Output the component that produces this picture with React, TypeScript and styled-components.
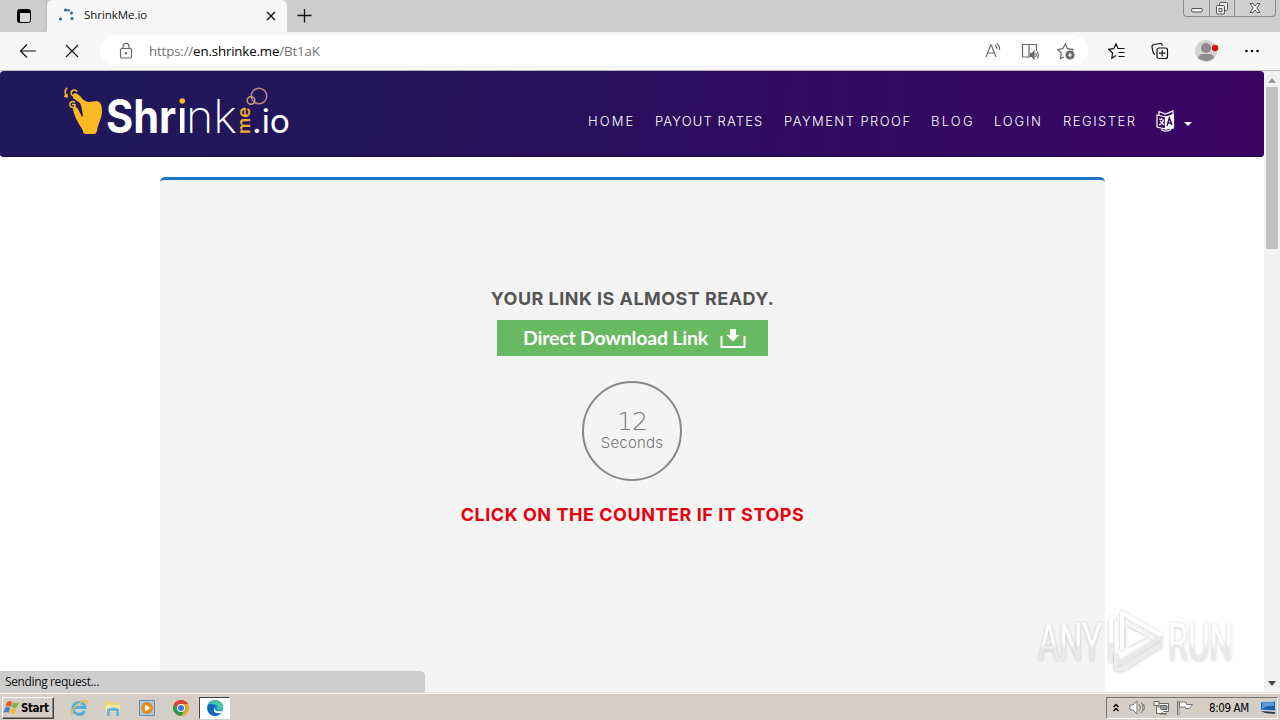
import React from "react";
import styled, { createGlobalStyle } from "styled-components";

const GlobalStyle = createGlobalStyle`
  * {
    box-sizing: border-box;
  }
  body {
    margin: 0;
    overflow: hidden;
    font-family: "Open Sans", "Noto Sans", sans-serif;
  }
  svg {
    display: block;
    flex: none;
  }
`;

const Screen = styled.div`
  position: relative;
  width: 1280px;
  height: 720px;
  display: flex;
  flex-direction: column;
  overflow: hidden;
  background: #fff;
`;

const TabStrip = styled.header`
  height: 32px;
  display: flex;
  background: #cdcdcd;
`;

const TabActions = styled.div`
  width: 47px;
  padding: 9px 0 0 17px;
  border-radius: 0 0 5px 0;
  box-shadow: inset -2px 0 2px -1px #b8b8b8;
`;

const Tab = styled.div`
  width: 240px;
  height: 32px;
  padding: 0 11px 0 10px;
  display: flex;
  align-items: center;
  background: #f7f7f7;
  border-radius: 6px 6px 0 0;
`;

const TabTitle = styled.span`
  flex: 1;
  margin-left: 9px;
  font-size: 11.5px;
  letter-spacing: -0.05px;
  line-height: 14px;
  margin-top: -2px;
  color: #111;
`;

const NewTab = styled.div`
  padding: 9px 0 0 10px;
`;

const WindowButtons = styled.div`
  height: 17px;
  margin: 0 4px 0 auto;
  display: flex;
  border: 1px solid #8a8a8a;
  border-top: 0;
  border-radius: 0 0 4px 4px;
  background: #cfcfcf;
`;

const WindowButton = styled.div<{ $width: number }>`
  width: ${({ $width }) => $width}px;
  display: flex;
  justify-content: center;
  & + & {
    border-left: 1px solid #8a8a8a;
  }
`;

const Toolbar = styled.div`
  height: 39px;
  display: flex;
  align-items: center;
  padding: 0 19px 1px 19px;
  background: #f7f7f7;
  border-bottom: 1px solid #b9b9c4;
`;

const NavButtons = styled.div`
  width: 81px;
  display: flex;
  gap: 27px;
`;

const AddressBar = styled.div`
  width: 988px;
  height: 31px;
  display: flex;
  align-items: center;
  padding: 0 13px 0 18px;
  background: #fff;
  border-radius: 16px;
`;

const Url = styled.span`
  flex: 1;
  margin-left: 15px;
  font-size: 13.3px;
  letter-spacing: -0.16px;
  color: #707070;
  b {
    font-weight: 400;
    color: #000;
  }
`;

const AddressIcons = styled.div`
  display: flex;
  gap: 18px;
`;

const BrowserIcons = styled.div`
  display: flex;
  align-items: center;
  margin-left: 20px;
`;

const Viewport = styled.div`
  height: 621px;
  display: flex;
`;

const Page = styled.main`
  width: 1264px;
  height: 621px;
  overflow: hidden;
`;

const SiteHeader = styled.div`
  height: 86px;
  display: flex;
  padding-left: 60px;
  border-radius: 4px;
  background: linear-gradient(100deg, #20195c 0%, #221559 30%, #320961 68%, #3a0363 100%);
  box-shadow: inset 0 -1px 1px #1c0648;
`;

const Menu = styled.nav`
  display: grid;
  grid-template-columns: 67px 129px 147px 63px 69px 93px 28px 10px;
  align-items: center;
  margin-left: 288px;
  padding-top: 14px;
`;

const MenuItem = styled.a<{ $spacing: number }>`
  font-family: Inter, sans-serif;
  font-size: 13px;
  font-weight: 300;
  line-height: 16px;
  letter-spacing: ${({ $spacing }) => $spacing}px;
  color: #fff;
  white-space: nowrap;
`;

const Caret = styled.i`
  width: 8px;
  margin-top: 6px;
  border: 4px solid transparent;
  border-top-color: #fff;
  border-bottom: 0;
`;

const Card = styled.section`
  width: 945px;
  height: 540px;
  margin: 20px 0 0 160px;
  padding-top: 108px;
  display: flex;
  flex-direction: column;
  align-items: center;
  background: #f4f4f4;
  border-top: 3px solid #2078cc;
  border-radius: 5px 5px 0 0;
`;

const Notice = styled.h4<{ $color: string; $spacing: number }>`
  margin: 0;
  font-family: Inter, sans-serif;
  font-size: 18px;
  font-weight: 700;
  line-height: 22px;
  letter-spacing: ${({ $spacing }) => $spacing}px;
  color: ${({ $color }) => $color};
  white-space: nowrap;
`;

const DownloadButton = styled.div`
  width: 271px;
  height: 36px;
  margin: 10px 0 25px;
  padding: 0 22px 0 26px;
  display: flex;
  align-items: center;
  justify-content: space-between;
  background: #67b962;
  color: #fff;
  font-family: Lato, sans-serif;
  font-size: 19.5px;
  font-weight: 700;
  line-height: 34px;
  letter-spacing: -0.2px;
  white-space: nowrap;
`;

const Counter = styled.div`
  width: 100px;
  height: 100px;
  margin: 0 1px 23px 0;
  padding-top: 25px;
  display: flex;
  flex-direction: column;
  align-items: center;
  border: 2px solid #888;
  border-radius: 50%;
  font-family: Inter, sans-serif;
  font-weight: 300;
  color: #777;
`;

const CounterValue = styled.span`
  font-family: "DejaVu Sans Light", "DejaVu Sans", sans-serif;
  font-size: 25px;
  font-weight: 200;
  line-height: 27px;
  letter-spacing: -1px;
`;

const CounterUnit = styled.span`
  font-size: 15px;
  line-height: 16px;
  letter-spacing: 0.2px;
`;

const Scrollbar = styled.div`
  width: 16px;
  display: flex;
  flex-direction: column;
  align-items: center;
  justify-content: space-between;
  padding: 7px 0 6px;
  background: #f1f1f1;
`;

const ScrollTrack = styled.div`
  flex: 1;
  padding-top: 4px;
`;

const ScrollThumb = styled.div`
  width: 12px;
  height: 162px;
  background: #c1c1c1;
`;

const StatusBubble = styled.div`
  position: absolute;
  left: 0;
  top: 671px;
  width: 425px;
  height: 22px;
  padding-left: 5px;
  background: #cdcdcd;
  border-radius: 0 5px 0 0;
  font-size: 12px;
  letter-spacing: -0.37px;
  line-height: 21px;
  color: #111;
`;

const Watermark = styled.svg`
  position: absolute;
  left: 1030px;
  top: 604px;
`;

const Taskbar = styled.footer`
  height: 28px;
  display: flex;
  align-items: center;
  padding: 3px 2px 1px;
  background: #d5cec6;
  border-top: 1px solid #e4e0da;
  box-shadow: inset 0 1px 0 #fff;
  font-family: "DejaVu Sans Condensed", "DejaVu Sans", sans-serif;
  color: #000;
`;

const StartButton = styled.div`
  width: 52px;
  height: 22px;
  display: flex;
  align-items: center;
  gap: 1px;
  border: 1px solid;
  border-color: #fff #444 #444 #fff;
  box-shadow: inset -1px -1px 0 #8a857f;
  font-size: 11.5px;
  font-weight: 700;
  letter-spacing: -0.4px;
`;

const QuickLaunch = styled.div`
  display: flex;
  align-items: center;
  gap: 16px;
  margin-left: 16px;
`;

const ActiveTask = styled.div`
  width: 31px;
  height: 22px;
  margin-left: 9px;
  display: flex;
  align-items: center;
  justify-content: center;
  background: #fff;
  border: 1px solid;
  border-color: #444 #fff #fff #444;
`;

const Tray = styled.div`
  width: 172px;
  height: 22px;
  margin-left: auto;
  padding-left: 6px;
  display: flex;
  align-items: center;
  border: 1px solid;
  border-color: #777 #fff #fff #777;
`;

const Clock = styled.span`
  width: 51px;
  margin-left: 16px;
  font-size: 11.5px;
  letter-spacing: -0.4px;
  white-space: nowrap;
`;

const Logo = () => (
  <svg width="240" height="86" viewBox="60 71 240 86" fontFamily="Inter, sans-serif">
    <path
      fill="#fbb924"
      d="M73 94c2-2 5 0 7 2 3 4 6 6 9 6l8-1c4 1 5 5 5 10 0 8-4 12-5 20-1 3-2 3-4 3h-7c-2 0-3-1-3-3-2-5-8-11-10-22 0-3 4-2 5 0l4 8 1-1c-1-5-1-9-3-13l-7-5z"
    />
    <g fill="none" stroke="#fbb924" strokeWidth="1.5">
      <path d="M77 92a3 3 0 1 0-2 4M75 102.500a3 3 0 1 0 0 4v-2h-3M67 88c-3 3-2 6 0 9m-3-1 3 1v-3M65 91l2-3" />
    </g>
    <g fill="#fff">
      <text x="106" y="133" fontSize="46" fontWeight="700" textLength="70" lengthAdjust="spacingAndGlyphs">
        Shr
      </text>
      <path d="M180 108h4.500v25H180z" />
      <text x="186" y="133" fontSize="46" fontWeight="200" textLength="51" lengthAdjust="spacingAndGlyphs">
        nk
      </text>
      <text x="252" y="133" fontSize="33" fontWeight="400" textLength="38" lengthAdjust="spacingAndGlyphs">
        .io
      </text>
    </g>
    <circle cx="182.300" cy="101" r="2.800" fill="#fbb924" />
    <text
      transform="translate(250 134) rotate(-90)"
      fontSize="18"
      fontWeight="600"
      fill="#f0a92a"
      textLength="27"
      lengthAdjust="spacingAndGlyphs"
    >
      me
    </text>
    <g fill="none" stroke="#b98a83" strokeWidth="1.500">
      <circle cx="259" cy="96" r="7.800" />
      <circle cx="251" cy="100.500" r="3.800" stroke="#c99b78" />
    </g>
  </svg>
);

const TranslateIcon = () => (
  <svg width="20" height="22" viewBox="0 0 20 22" fill="none" stroke="#fff" strokeWidth="1.200">
    <path d="M1 5 9.500 7v12L1 17zM3 5V1.500L9.500 4 17 1v4" />
    <path fill="#fff" d="m9.500 7 8-2.500V18l-8 1z" />
    <path d="m3 9 5 1M5.500 8v2m2 0c-.5 2-2 4-4.500 5m1-4 4 4M5 19.500c3 2 7 2 10 0" />
    <path stroke="#35095f" strokeWidth="1.400" d="m11 16 2.300-8 2.700 7m-4.200-2h3.500" />
  </svg>
);

const menu = [
  { label: "HOME", spacing: 2.1 },
  { label: "PAYOUT RATES", spacing: 1.15 },
  { label: "PAYMENT PROOF", spacing: 1.45 },
  { label: "BLOG", spacing: 2.2 },
  { label: "LOGIN", spacing: 1.8 },
  { label: "REGISTER", spacing: 1.5 },
];

const BrowserTabs = () => (
  <TabStrip>
    <TabActions>
      <svg width="14" height="14" viewBox="0 0 14 14">
        <rect x=".5" y=".5" width="13" height="13" rx="2" fill="#d8d8d8" stroke="#000" />
        <path d="M1 1h12v3H1zM1 4h2v9H1z" />
      </svg>
    </TabActions>
    <Tab>
      <svg width="18" height="16" viewBox="0 0 18 16" fill="#2d6698">
        <circle cx="3.500" cy="11" r="1.600" />
        <circle cx="8.500" cy="2" r="1.600" />
        <circle cx="11.500" cy="2.300" r="1.300" />
        <circle cx="14.500" cy="5" r="1.600" />
        <circle cx="15" cy="10.500" r="1.600" />
      </svg>
      <TabTitle>ShrinkMe.io</TabTitle>
      <svg width="10" height="10" viewBox="0 0 10 10" stroke="#111" strokeWidth="1.400">
        <path d="m1 1 8 8M9 1 1 9" />
      </svg>
    </Tab>
    <NewTab>
      <svg width="15" height="14" viewBox="0 0 15 14" stroke="#111" strokeWidth="1.300">
        <path d="M.5 6.500h14M7.500 0v13.500" />
      </svg>
    </NewTab>
    <WindowButtons>
      <WindowButton $width={25}>
        <svg width="12" height="16" viewBox="0 0 12 16">
          <rect x=".5" y="8.500" width="11" height="3.500" rx="1.500" fill="#eee" stroke="#555" />
        </svg>
      </WindowButton>
      <WindowButton $width={25}>
        <svg width="14" height="16" viewBox="0 0 14 16" fill="#eee" stroke="#555">
          <rect x="4.500" y="2.500" width="8" height="8" rx="1" />
          <rect x="1.500" y="5.500" width="8" height="8.500" rx="1" />
          <path d="M4 8.500h3v3H4z" />
        </svg>
      </WindowButton>
      <WindowButton $width={41}>
        <svg width="12" height="16" viewBox="0 0 12 16">
          <path
            fill="#f2f2f2"
            stroke="#555"
            d="M1 3.500h3L6 6l2-2.500h3L7.800 8l3.200 4.500H8L6 10l-2 2.500H1L4.200 8z"
          />
        </svg>
      </WindowButton>
    </WindowButtons>
  </TabStrip>
);

const BrowserToolbar = () => (
  <Toolbar>
    <NavButtons>
      <svg width="18" height="16" viewBox="0 0 18 16" fill="none" stroke="#111" strokeWidth="1.200">
        <path d="M17 8H1.500M8 1.500 1.500 8 8 14.500" />
      </svg>
      <svg width="16" height="16" viewBox="0 0 16 16" stroke="#111" strokeWidth="1.100">
        <path d="m2 2 12 12M14 2 2 14" />
      </svg>
    </NavButtons>
    <AddressBar>
      <svg width="16" height="18" viewBox="0 0 16 18" fill="none" stroke="#666" strokeWidth="1.200">
        <rect x="2.500" y="6.500" width="11" height="9.500" rx="1.500" />
        <path d="M5 6.500V4.300a3 3 0 0 1 6 0v2.200" />
        <circle cx="8" cy="11.300" r=".6" fill="#666" />
      </svg>
      <Url>
        https://<b>en.shrinke.me</b>/Bt1aK
      </Url>
      <AddressIcons>
        <svg width="18" height="18" viewBox="0 0 18 18" fill="none" stroke="#666" strokeWidth="1.100">
          <path d="m2 15 4.700-12h.6L12 15M3.500 11h7M11 3c1.500 1 2 2.500 2 4m-.5-5.500c2.500 1.500 3.500 4 3 6.500" />
        </svg>
        <svg width="19" height="18" viewBox="0 0 19 18" fill="none" stroke="#666" strokeWidth="1.200">
          <path d="M9 15H2.500V2.500H9V15M9 2.500h7.500V9M9 15h1" />
          <path fill="#666" d="m10.500 11.500 1.500 0 2-2v7l-2-2h-1.500z" />
          <path d="M15.500 11q1.500 2 0 4m1.700-5.500q2.300 3.500 0 7" />
        </svg>
        <svg width="18" height="18" viewBox="0 0 18 18" fill="none" stroke="#666" strokeWidth="1.200">
          <path d="m7 15-3.500 1.500.7-5.200L.8 7.500l5-.8L8.300 2l2.300 4.700 5.200.8-1 1" />
          <circle cx="13" cy="13" r="4" fill="#666" />
          <path stroke="#fff" d="M10.800 13h4.400M13 10.800v4.400" />
        </svg>
      </AddressIcons>
    </AddressBar>
    <BrowserIcons>
      <svg width="18" height="18" viewBox="0 0 18 18" fill="none" stroke="#111" strokeWidth="1.200">
        <path d="m8 13.500-4.200 2.700.8-5.200L.7 7.300l5-.6L8 2l2 4.500h6.500M10.500 10.500h6M10.500 14.500h6" />
      </svg>
      <svg
        width="44"
        height="18"
        viewBox="-25 0 44 18"
        fill="none"
        stroke="#111"
        strokeWidth="1.200"
      >
        <path d="M4 12.500C2 12 2 10 1.700 8.500L1 5q-.3-2 2-2.500l6-1q2-.3 2.500 2" />
        <rect x="6" y="6" width="10.500" height="10.500" rx="2" />
        <path d="M11.200 8v6.500M8 11.200h6.500" />
      </svg>
      <svg width="50" height="24" viewBox="-25 0 50 24">
        <circle cx="11" cy="12" r="11" fill="#d3d3d0" />
        <circle cx="11" cy="9" r="5" fill="#8d8b89" />
        <path fill="#8d8b89" d="M3 19q1-4 5-4h6q4 0 5 4-7 6-16 0" />
        <circle cx="20" cy="9" r="3.200" fill="#d80b13" />
      </svg>
      <svg width="41" height="18" viewBox="-25 0 41 18">
        <circle cx="1.500" cy="9" r="1.300" />
        <circle cx="7" cy="9" r="1.300" />
        <circle cx="12.500" cy="9" r="1.300" />
      </svg>
    </BrowserIcons>
  </Toolbar>
);

const DesktopTaskbar = () => (
  <Taskbar>
    <StartButton>
      <svg width="17" height="16" viewBox="0 0 17 16">
        <path fill="#e45b28" d="M4 2q3-2 5 0L8 7Q5 5 2.500 7z" />
        <path fill="#75b83b" d="M10 2q3 2 6 0l-2 5q-3 2-5 0z" />
        <path fill="#3d83cb" d="M2 8q3-2 5 0l-1.500 5q-2-2-5 0z" />
        <path fill="#f4bd28" d="M8.500 8q3 2 5 0L12 13q-3 2-5 0z" />
      </svg>
      Start
    </StartButton>
    <QuickLaunch>
      <svg width="18" height="18" viewBox="0 0 18 18" fill="none">
        <path stroke="#4eafe3" strokeWidth="3" d="M14.500 12A6 6 0 1 1 15 8.500H4" />
        <path stroke="#e8bf41" strokeWidth="1.500" d="M3 16c-4 0 0-7 4-10s9-6 10-3q0 1-1 2" />
      </svg>
      <svg width="18" height="18" viewBox="0 0 18 18">
        <path fill="#efd36c" d="M1 2h5l2 2h7v8H1z" />
        <path fill="#f9e9a4" d="M2 6h14v7H2z" />
        <path fill="#65b5dd" d="M3 10q6-3 12 0v7h-3v-5H6v5H3z" />
      </svg>
      <svg width="18" height="18" viewBox="0 0 18 18">
        <path fill="#a8cce9" stroke="#5790c0" d="M1.500 1.500h15v15h-15z" />
        <circle cx="9" cy="9" r="6" fill="#f18916" />
        <path fill="#fff" d="m7 5.500 5.500 3.500L7 12.500z" />
      </svg>
      <svg width="18" height="18" viewBox="0 0 18 18">
        <circle cx="9" cy="9" r="8" fill="#e1a621" />
        <path fill="#d94332" d="M2 5q2.500-4 7-4t7 4H9L5.500 11z" />
        <path fill="#269850" d="M2 5q-3 6 2 10 2 2 5 2l4-7H5z" />
        <circle cx="9" cy="9" r="4" fill="#fff" />
        <circle cx="9" cy="9" r="3" fill="#3879d9" />
      </svg>
    </QuickLaunch>
    <ActiveTask>
      <svg width="18" height="18" viewBox="0 0 18 18">
        <circle cx="9" cy="9" r="8" fill="#168bd0" />
        <path fill="#45c8a1" d="M2 5C6-1 17 0 17 8c0 4-5 4-6 2 2-3-2-6-9-5" />
        <path fill="#1467b5" d="M2 6q6-2 7 2-5 7 6 6-4 4-9 2Q0 13 2 6" />
        <path fill="#fff" d="M9 8q-2 5 7 4l-1 2q-7 1-7-3 0-2 1-3" />
      </svg>
    </ActiveTask>
    <Tray>
      <svg width="6" height="10" viewBox="0 0 6 10" fill="none" stroke="#000" strokeWidth="1.300">
        <path d="m.5 4 2.500-2.500L5.500 4m-5 4L3 5.500 5.500 8" />
      </svg>
      <svg width="27" height="18" viewBox="-10 0 27 18" fill="#fff" stroke="#777">
        <path d="M1 6h3l4-4v13l-4-4H1z" />
        <path fill="none" d="M10 5q3 3.500 0 7m2-9q4 5.500 0 11m2.500-9q2 3.500 0 7" />
      </svg>
      <svg width="24" height="18" viewBox="-7 0 24 18" fill="#f9f9f9" stroke="#666">
        <path d="M5.500 4.500h10v8h-10z" />
        <path fill="#999" d="M7 6.500h7v4H7z" />
        <path d="M1 2.500h5v4H1zM3.500 7v7.500H13M9 13v2m-2 0h7" />
      </svg>
      <svg width="23" height="18" viewBox="-7 0 23 18" fill="#fff" stroke="#777">
        <path d="M2 2.500v13H.5v-13zM2.500 3.500q4-1.500 7 0v2h6l-3 4h-4V8h-6z" />
      </svg>
      <Clock>8:09 AM</Clock>
      <svg width="16" height="15" viewBox="0 0 16 15">
        <path fill="#1760ad" stroke="#bdd5e7" d="m.5 2 15-1v10l-15-1z" />
        <path fill="#5b9cdb" d="m2 3 12-1v4Q7 5 2 9z" />
        <path fill="#24384b" d="m1 11 14 1v2L5 13z" />
      </svg>
    </Tray>
  </Taskbar>
);

export default function App() {
  return (
    <Screen>
      <GlobalStyle />
      <BrowserTabs />
      <BrowserToolbar />
      <Viewport>
        <Page>
          <SiteHeader>
            <Logo />
            <Menu>
              {menu.map((item) => (
                <MenuItem key={item.label} $spacing={item.spacing}>
                  {item.label}
                </MenuItem>
              ))}
              <TranslateIcon />
              <Caret />
            </Menu>
          </SiteHeader>
          <Card>
            <Notice $color="#555" $spacing={0.46}>
              YOUR LINK IS ALMOST READY.
            </Notice>
            <DownloadButton>
              Direct Download Link
              <svg width="26" height="20" viewBox="0 0 26 20">
                <path fill="none" stroke="#fff" strokeWidth="2" d="M1.500 8v11h23V8" />
                <path fill="#fff" d="M10 1h6v6h3.500L13 13.500 6.500 7H10z" />
              </svg>
            </DownloadButton>
            <Counter>
              <CounterValue>12</CounterValue>
              <CounterUnit>Seconds</CounterUnit>
            </Counter>
            <Notice $color="#e6000d" $spacing={0.54}>
              CLICK ON THE COUNTER IF IT STOPS
            </Notice>
          </Card>
        </Page>
        <Scrollbar>
          <svg width="8" height="5" viewBox="0 0 8 5">
            <path fill="#999" d="M0 5 4 0l4 5z" />
          </svg>
          <ScrollTrack>
            <ScrollThumb />
          </ScrollTrack>
          <svg width="8" height="5" viewBox="0 0 8 5">
            <path fill="#444" d="m0 0 4 5 4-5z" />
          </svg>
        </Scrollbar>
      </Viewport>
      <DesktopTaskbar />
      <StatusBubble>Sending request...</StatusBubble>
      <Watermark width="212" height="76" viewBox="1030 604 212 76">
        <defs>
          <filter id="soft" x="-20%" y="-20%" width="140%" height="140%">
            <feDropShadow dx="0" dy="0.5" stdDeviation="1.800" floodColor="#555" floodOpacity=".36" />
          </filter>
          <linearGradient id="fade" x1="0" y1="0" x2="0" y2="1">
            <stop offset=".5" stopColor="#fff" />
            <stop offset=".6" stopColor="#e9e9e9" />
          </linearGradient>
        </defs>
        <g filter="url(#soft)" fill="url(#fade)" fontFamily="Roboto, sans-serif" fontSize="52" fontWeight="400">
          <text transform="translate(1038 660) scale(.63 1)">ANY</text>
          <text transform="translate(1168 660) scale(.63 1)">RUN</text>
          <g fill="none" stroke="#f8f8f8" strokeWidth="4" strokeLinejoin="round">
            <path stroke="#fff" d="M1122 650v-37l40 23" />
            <path stroke="#e9e9e9" d="M1162 637l-44 27" />
            <path stroke="#fff" d="M1116 617q-5 0-5 5v20" />
            <path stroke="#ececec" d="M1111 642v20M1116 653v16h7l39-25" />
            <path d="M1127 628v19l19-10z" fill="#fff" strokeWidth="1" />
            <path d="m1127 624 27 15" strokeWidth="2" />
          </g>
        </g>
      </Watermark>
    </Screen>
  );
}
